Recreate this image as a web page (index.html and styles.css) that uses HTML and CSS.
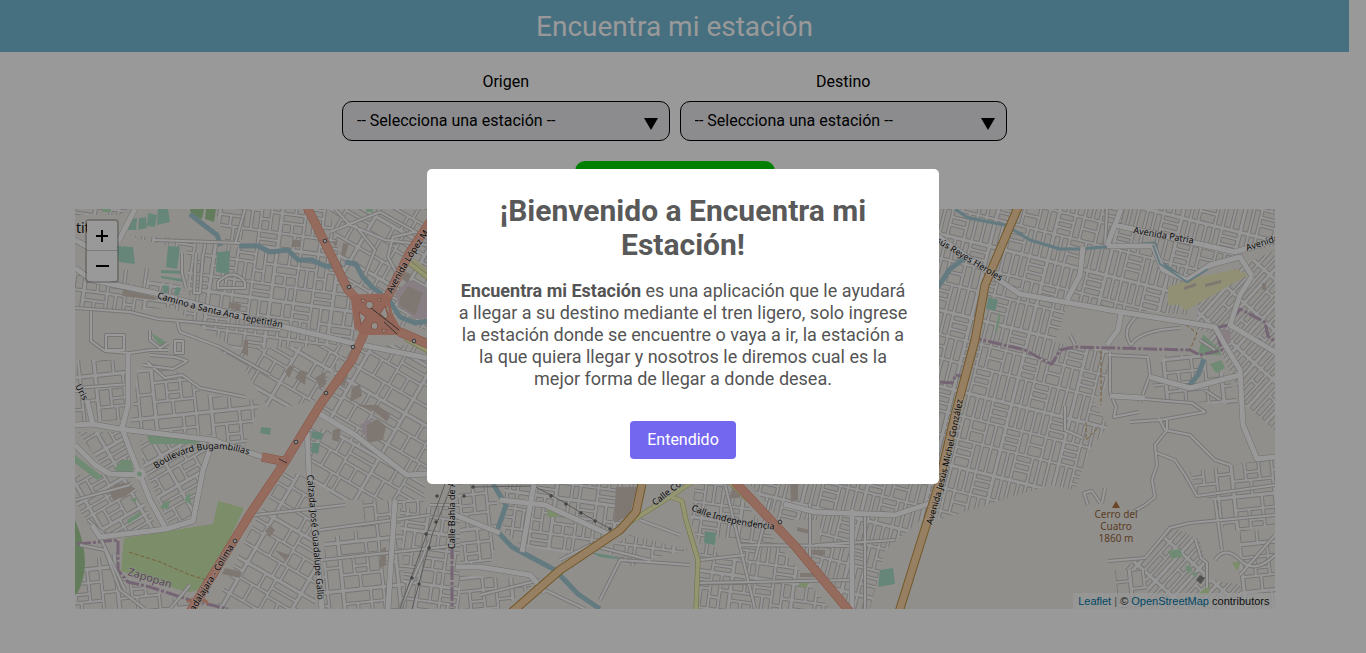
FILE: index.html
```html
<!DOCTYPE html>
<html lang="es">
<head>
<meta charset="utf-8">
<meta name="viewport" content="width=device-width, initial-scale=1">
<title>Encuentra mi estación</title>
<link rel="stylesheet" href="styles.css">
</head>
<body>
<div class="page">
  <header class="header"><h1 class="header-title">Encuentra mi estación</h1></header>
  <main class="main">
    <form class="search">
      <div class="fields">
        <div class="field">
          <label for="origen">Origen</label>
          <div class="select-box">
            <select id="origen"><option>-- Selecciona una estación --</option></select>
            <svg class="arrow" viewBox="0 0 14 12" aria-hidden="true"><path d="M0 0h14L7 12z"/></svg>
          </div>
        </div>
        <div class="field">
          <label for="destino">Destino</label>
          <div class="select-box">
            <select id="destino"><option>-- Selecciona una estación --</option></select>
            <svg class="arrow" viewBox="0 0 14 12" aria-hidden="true"><path d="M0 0h14L7 12z"/></svg>
          </div>
        </div>
      </div>
      <button class="search-button" type="button" aria-label="Buscar"></button>
    </form>

    <section class="map" aria-label="Mapa">
      <svg class="map-canvas" viewBox="75 209 1200 400" preserveAspectRatio="xMidYMid slice">
        <defs>
          <pattern id="g-a" width="62" height="52" patternUnits="userSpaceOnUse" patternTransform="rotate(8)">
            <rect class="st" width="62" height="52"/>
            <path class="bl" d="M1.500 1.500h10v13h-10zM14.500 1.500h7v13h-7zM24.500 1.500h15v5h-15zM24.500 9.500h15v5h-15zM42.500 1.500h7v21h-7zM52.500 1.500h7v13h-7zM1.500 17.500h20v6h-20zM24.500 17.500h6v17h-6zM33.500 17.500h6v17h-6zM52.500 17.500h7v17h-7zM1.500 26.500h8v8h-8zM12.500 26.500h9v8h-9zM42.500 25.500h7v9h-7zM1.500 37.500h12v12h-12zM16.500 37.500h5v12h-5zM24.500 37.500h15v12h-15zM42.500 37.500h17v5h-17zM42.500 45.500h17v4h-17z"/>
          </pattern>
          <pattern id="g-b" width="60" height="74" patternUnits="userSpaceOnUse" patternTransform="rotate(14)">
            <rect class="st" width="60" height="74"/>
            <path class="bl" d="M1.500 1.500h5v20h-5zM9.500 1.500h5v20h-5zM17.500 1.500h6v20h-6zM26.500 1.500h5v20h-5zM34.500 1.500h5v20h-5zM42.500 1.500h15v4h-15zM42.500 8.500h15v5h-15zM42.500 16.500h15v5h-15zM1.500 24.500h13v5h-13zM1.500 32.500h13v4h-13zM1.500 39.500h13v5h-13zM17.500 24.500h6v20h-6zM26.500 24.500h13v8h-13zM26.500 35.500h13v9h-13zM42.500 24.500h6v20h-6zM51.500 24.500h6v20h-6zM1.500 47.500h5v24h-5zM9.500 47.500h5v24h-5zM17.500 47.500h14v5h-14zM17.500 55.500h14v5h-14zM17.500 63.500h14v8h-14zM34.500 47.500h5v24h-5zM42.500 47.500h6v24h-6zM51.500 47.500h6v24h-6z"/>
          </pattern>
          <pattern id="g-c" width="62" height="52" patternUnits="userSpaceOnUse" patternTransform="rotate(30)">
            <rect class="st" width="62" height="52"/>
            <path class="bl" d="M1.500 1.500h18v13h-18zM22.500 1.500h9v13h-9zM34.500 1.500h25v6h-25zM34.500 10.500h25v7h-25zM1.500 17.500h12v16h-12zM16.500 17.500h15v16h-15zM34.500 20.500h11v13h-11zM48.500 20.500h11v13h-11zM1.500 36.500h25v13h-25zM29.500 36.500h6v13h-6zM38.500 36.500h21v13h-21z"/>
          </pattern>
          <pattern id="g-d" width="56" height="48" patternUnits="userSpaceOnUse" patternTransform="rotate(-6)">
            <rect class="st" width="56" height="48"/>
            <path class="bl" d="M1.500 1.500h24v10h-24zM28.500 1.500h10v10h-10zM41.500 1.500h12v21h-12zM1.500 14.500h10v16h-10zM14.500 14.500h11v8h-11zM28.500 14.500h10v16h-10zM14.500 25.500h11v5h-11zM41.500 25.500h12v20h-12zM1.500 33.500h15v12h-15zM19.500 33.500h19v12h-19z"/>
          </pattern>
          <pattern id="g-e" width="44" height="34" patternUnits="userSpaceOnUse" patternTransform="rotate(-30)">
            <rect class="st" width="44" height="34"/>
            <path class="bl" d="M1.500 1.500h17v5h-17zM1.500 9.500h17v5h-17zM21.500 1.500h20v5h-20zM21.500 9.500h20v5h-20zM1.500 17.500h8v14h-8zM12.500 17.500h14v6h-14zM12.500 26.500h14v5h-14zM29.500 17.500h12v14h-12z"/>
          </pattern>
          <pattern id="g-f" width="38" height="24" patternUnits="userSpaceOnUse" patternTransform="rotate(-48)">
            <rect class="st" width="38" height="24"/>
            <path class="bl" d="M1.500 1.500h34v5h-34zM1.500 9.500h20v5h-20zM24.500 9.500h11v5h-11zM1.500 17.500h34v4h-34z"/>
          </pattern>
          <path id="p-camino" d="M157 298Q205 314 284 328"/>
          <path id="p-bugam" d="M156 469Q200 438 249 455"/>
          <path id="p-calzada" d="M307 475Q313 540 318 604"/>
          <path id="p-indep" d="M691 510Q722 525 779 530"/>
          <path id="p-heroles" d="M929 238L1013 289"/>
          <path id="p-lopez" d="M392 294Q408 260 440 218"/>
          <path id="p-michel" d="M932 525Q950 470 966 382"/>
          <path id="p-colima" d="M188 622L243 532"/>
        </defs>

        <rect class="land" x="75" y="209" width="1200" height="400"/>

        <!-- Street grids by neighbourhood -->
        <path fill="url(#g-a)" d="M255 209H330L348 288 360 350 280 327 190 306 186 245 215 248 255 250zM215 209H300V240H225zM125 235L180 238 255 250V262L160 244zM75 270L135 285 180 307 128 311 75 306z"/>
        <path fill="url(#g-a)" d="M75 215H120L130 209H75zM145 280L180 285V309L150 305zM173 308L300 330 345 345 335 372 255 362z"/>
        <path fill="url(#g-c)" d="M330 209H430V330L395 325 345 280zM220 350L345 345 318 400 270 410 245 370zM345 345H430V475L400 470 320 412zM285 470L315 480V609H215L250 530z"/>
        <path fill="url(#g-d)" d="M78 360H125V420L75 422V390zM138 370L175 370 205 395 260 400 245 448 210 435 130 428zM340 497H425L408 609H322L325 540 358 530zM458 484H495L500 535 490 565H456zM456 575L540 580 500 609H456zM75 565L118 552V570L135 585 190 604V609H75z"/>
        <path fill="url(#g-c)" d="M309 425L360 440 425 485 424 500 340 500 312 480z"/>
        <path fill="url(#g-e)" d="M75 475L110 475 130 480 158 528 100 535 82 515 75 500zM140 440L208 442 198 515 170 527 143 465zM78 432L122 432 135 475 105 470z"/>
        <path fill="url(#g-a)" d="M505 484H638L620 525 575 555 520 545 503 530zM400 508H460V609H405zM695 484H730L830 609H700V545L690 520zM630 535L690 550 685 565 645 575 605 550z"/>
        <path fill="url(#g-b)" d="M750 484H938L933 510 885 550 870 609H845L800 545z"/>
        <path fill="url(#g-b)" d="M938 209H1275V245L1220 260 1180 285 1190 315 1082 306 1054 340 1070 347 1110 350 1105 390 1092 400 1108 425 1090 450 1075 490 1050 485 938 520z"/>
        <path fill="url(#g-f)" d="M1200 285L1275 250V430L1245 405 1220 350 1195 340zM1170 525L1200 540 1210 580 1245 585 1230 609H1128L1120 570 1145 555z"/>
        <path fill="url(#g-d)" d="M1190 472L1275 458V525L1225 532 1215 500 1198 495zM1165 355L1200 355 1230 380 1238 405 1160 400 1150 380zM1115 570H1145L1150 609H1118zM1240 530H1275V609H1240z"/>
        <path class="land" d="M1067 306L1115 316 1210 332 1204 347H1083L1073 345 1055 342zM1107 355L1148 356 1153 388 1112 396zM640 560L690 550V609H590zM710 536L740 540 745 558 720 560zM780 520H820V545H785zM320 502L362 500 365 525 330 532z"/>

        <!-- Land use -->
        <path class="pitch" d="M117 246L133 247 135 264 119 262zM168 246L180 247 177 269 166 267zM217 252L230 251 229 274 216 272zM161 270L184 271V274L161 273zM161 276L183 279V282L161 278zM163 285L169 286 167 295 163 293zM176 287L181 288 178 296 174 294zM128 219L137 218 136 230 127 230zM139 218L146 217 147 228 138 230zM148 213L157 215 155 227 147 226zM158 209H168L170 222 157 225zM312 431L323 433 321 440 311 438zM312 443L320 443 318 454 311 452zM261 427L271 428 270 435 260 433zM705 531L716 533 715 545 704 543zM880 570L893 568 895 584 878 587zM988 297L998 300 995 311 986 309zM590 552L612 556 625 560 600 557z"/>
        <path class="park" d="M102 209H111V212H102zM150 332L165 341 163 349 157 342zM147 436L160 434 200 441 198 444 150 444zM116 467L122 460 132 460 133 473 115 472zM75 455L103 477 97 480 75 463zM163 503L170 500 168 509 160 508zM184 500L190 492 191 505zM127 520L141 511 139 517 128 524zM129 500L137 497 136 502zM1203 334L1220 350 1221 355 1198 355zM1210 364L1221 360 1225 368 1216 373zM1168 551L1180 549 1183 556 1172 559zM1185 567L1190 565 1192 571 1188 573zM1191 573L1197 572 1196 578zM366 209H373V212H366zM999 313L1001 314 997 332 995 331z"/>
        <path class="forest" d="M190 209H204L202 219 191 215zM206 209H216L214 222 205 219zM75 520Q88 550 84 574 80 592 75 595z"/>
        <path class="grass" d="M124 538L213 524 218 501 244 508 207 588 190 592 183 591 121 571zM547 510H558V517H548zM1200 592L1210 584 1209 595H1198zM800 582L808 583 807 588 798 586zM1232 562h9l-4 9z"/>
        <path class="school" d="M1168 287L1193 278 1237 269 1248 275 1185 311 1180 305H1168zM415 258L432 275V284L408 265z"/>
        <path class="industrial" d="M395 292L410 280 430 290V318L415 319 398 305zM1214 328L1230 330 1231 343 1222 345zM360 425L372 418 367 440z"/>
        <path class="building" d="M400 298L408 286 423 293 415 315 399 305zM405 272L412 274 408 283 402 279zM123 289L156 297 154 300 122 296zM292 240H300V247H292zM343 243L349 244 345 257 341 255zM332 242L338 240 336 247zM244 340H248V356L242 353zM230 302L241 304 240 311 229 308zM285 372L290 365 294 367 289 378zM295 378L300 370 307 372 305 385zM315 378L325 372 326 384 320 389zM340 378L348 374 345 386 338 384zM352 388L360 384 362 396 350 402zM110 493L115 484 128 483 135 489 125 497 113 500zM367 425L377 419 386 426 383 440 367 443zM333 430L341 428 339 442 332 440zM357 405L377 405 390 415 387 422 374 411zM275 550L290 555 286 561zM265 531L270 525 275 530 270 537zM616 487H637L630 515 614 523zM380 550L386 547V565L380 568zM790 482H798V500L791 502zM797 527L810 530V534L797 531zM812 550L825 550V555L813 555zM800 573H815V577H800zM735 484H740V498H729zM1262 283h4v7h-4zM1184 287l12-4v3l-12 4zM1205 284l16-4v3l-16 4zM225 568L242 572 240 578 222 574z"/>
        <path class="rock" d="M1200 575l5 3-4 6-5-4z"/>

        <!-- Water -->
        <path class="river" d="M190 214L205 226 217 235 221 246M239 246H258L270 252 288 250 298 260 312 260 325 266 342 267M345 262L356 264 362 276 372 287 382 294M387 297L400 317 415 323 430 321M493 484L506 505 497 531 512 547 555 570 578 594 600 609M965 258L950 269 938 287M1204 359L1198 375 1187 388"/>
        <path class="stream" d="M955 209L968 218 1005 225 1030 240 1060 249 1080 249 1115 246 1155 243 1160 262 1187 280 1210 265 1237 258"/>

        <!-- Boundaries -->
        <path class="boundary" d="M77 544L118 540V570L128 582 150 587 190 600 228 609M452 545V609M940 382L952 383 956 375 964 377 974 338 1025 350 1045 361 1052 364 1060 350 1075 347 1190 350 1200 355 1222 350 1215 328 1228 325 1240 309 1265 322 1268 336 1275 342"/>
        <path class="track" d="M129 552L160 562 190 575 207 580M1186 325L1197 333 1190 350M1101 350V405M1086 422v18l8-8 5-5"/>

        <!-- Minor streets -->
        <g class="minor">
          <path id="minor" d="M75 308L130 312 158 319 280 330 M91 311V341L105 351 130 353 150 350 168 350M177 321L180 332 220 347 270 375M147 362L165 378 182 375 200 388 245 397M75 388L130 384M106 335h18v15h-18zM150 330v10l10 8 8-5M175 341h8v12h-8zM155 240L240 243M150 355l25 2 12 4-14 8-30-4M182 253v20l4 15M126 270l-2 18M147 268l-3 20M196 253l-2 40h6l3-40M245 209l-10 35M218 282q15-15 27 0v6h-27zM335 209L350 225 385 240 427 245M330 232L380 212 430 240M355 225l20 25-10 25M415 232l-22 5-5 20 8 15-8 25M75 500L130 485M88 520L105 535M80 545L105 550 120 590 145 609M100 537L125 590M190 585L170 609M205 590l-5 15M255 515L345 505M320 530L430 515M322 560L460 545M430 505H460M430 540L400 609M1075 345L1070 335M1107 209L1105 245M1159 418L1165 430 1190 435 1205 450 1215 460 1230 465M1167 420V430L1155 445 1157 465 1152 480 1155 497 1145 505 1133 512M1157 453L1175 460 1185 475 1197 496 1275 485M1110 352v40l6 15-2 10 25-5M1108 561L1145 558 1170 528 1190 523 1275 515M1115 396L1155 400 1192 403 1205 412 1160 420 1130 422M1108 355L1148 357M1148 358L1150 375 1140 402M1065 406v24l18 8M1088 505l-4-12 8-2 8 12M1105 488l-3 15M1195 538l6 20 6 5v25M1200 340L1215 350M1205 390L1220 400M1215 500L1222 550M1215 560Q1225 545 1240 560T1275 555M1240 575L1275 535M480 595L540 580M545 590L585 609M600 600L620 560 690 565M560 560L590 545 650 560M640 520L680 535M700 560L745 555M725 484L755 609M770 500L755 560M695 583L850 580M740 545L850 546M810 505V560M815 545L895 540M865 515V609M1138 315Q1120 330 1131 345 1140 330 1180 328"/>
          <use href="#minor" class="minor-fill"/>
        </g>

        <!-- Railway -->
        <path class="rail" d="M445 484L421 550 400 609M452 484L432 535 412 609M473 487L534 486 551 495 565 503 580 512 594 520 609 528"/>
        <path class="tower" d="M472 486h2v2h-2zM463 495h2v2h-2zM533 486h2v2h-2zM550 495h2v2h-2zM565 503h2v2h-2zM580 512h2v2h-2zM594 520h2v2h-2zM609 528h2v2h-2zM436 495h2v2h-2zM435 521h2v2h-2zM425 533h2v2h-2zM428 547h2v2h-2zM411 577h2v2h-2zM418 583h2v2h-2z"/>

        <!-- Main streets -->
        <g class="avenue">
          <path id="avenue" d="M75 240L90 248M118 242L135 209M75 268L92 280 155 293 255 320 352 343 427 358M75 425L92 424 120 429 213 440 262 457M87 400L93 425M128 354V405L122 428 130 450 150 500 166 529M75 445L95 465 110 474 145 475M213 440L203 470 193 521 166 529 100 537 92 525M307 428L309 475 322 609M318 413L355 435 407 475 427 474M395 500L388 609M456 567L480 567 530 575 545 592M455 515L500 533M500 500L545 505 610 535M534 484L522 552M784 504L815 512 895 515 940 500M852 510V609M918 222L1002 282 1020 294 1115 311 1215 327 1225 345 1240 370 1243 425 1257 459 1275 457M1083 247L1080 275 1067 300M1121 209L1107 246M1115 225L1235 252 1275 240M1107 246H1153L1163 270 1187 280 1210 265 1240 257 1252 276M1252 276L1240 295 1230 325 1275 352M1121 314L1118 330 1107 345M1110 396L1145 398M1150 377L1190 388 1240 375"/>
          <use href="#avenue" class="avenue-fill"/>
        </g>
        <path class="canal" d="M968 217L1005 225 1030 240 1060 249 1080 249M1153 245L1160 264 1187 282 1208 269"/>
        <circle class="roundabout" cx="139.500" cy="474" r="4"/>

        <!-- Highways -->
        <g class="secondary">
          <path id="secondary" d="M692 482L665 500 630 522M668 496L682 501 686 520 698 560 696 609M430 352L405 338M730 482L748 500M440 287L408 262"/>
          <use href="#secondary" class="secondary-fill"/>
        </g>
        <g class="primary">
          <path id="primary" d="M642 484L636 512 620 530 560 570 512 612M1019 205L985 285 975 340 955 415 938 487 899 612"/>
          <use href="#primary" class="primary-fill"/>
        </g>
        <g class="trunk">
          <path id="trunk" d="M306 205L327 247 348 290 368 312 400 332 430 345M430 222L410 252 386 300 368 325 352 360 320 405 285 462 250 514 190 612M735 482L795 546 850 612M262 457L287 462"/>
          <use href="#trunk" class="trunk-fill"/>
        </g>
        <path class="ramp" d="M353 296L384 295M352 296L356 328 364 332M387 295L391 314 400 330M364 332L398 332M280 462q10 6 7-8M187 602q15-8 21 2"/>
        <path class="junction" d="M354 296H388L385 306 400 330 398 335H360L354 322z"/>
        <path class="island" d="M366 304a3 3 0 1 1 7 2 3 3 0 0 1-7-2zM371 326a3 3 0 1 1 7 0 3 3 0 0 1-7 0zM380 314l5-8 3 10-2 3zM359 312l7 5-5 8zM361 299l5 1-4 3zM377 299l4-1-1 4zM382 329l5 1-4 3z"/>
        <path class="bridge" d="M371 308L399 330M384 322L397 334M279 459L287 463"/>
        <path class="shield" d="M323 240l3-1 1 3-3 1zM347 286l3-1 1 3-3 1zM351 346l3-1 1 3-3 1zM324 392l3-1 1 3-3 1zM412 340l3-1 1 3-3 1zM294 441l3-1 1 3-3 1zM233 540l3-1 1 3-3 1zM778 521l3-1 1 3-3 1z"/>

        <!-- Labels -->
        <g class="labels">
          <text x="76" y="233" class="label-big">tit</text>
          <text><textPath href="#p-camino">Camino a Santa Ana Tepetitlán</textPath></text>
          <text><textPath href="#p-bugam">Boulevard Bugambilias</textPath></text>
          <text><textPath href="#p-calzada">Calzada José Guadalupe Gallo</textPath></text>
          <text><textPath href="#p-indep">Calle Independencia</textPath></text>
          <text><textPath href="#p-heroles">Jesús Reyes Heroles</textPath></text>
          <text><textPath href="#p-lopez">Avenida López M</textPath></text>
          <text><textPath href="#p-michel">Avenida Jesús Michel González</textPath></text>
          <text><textPath href="#p-colima">Guadalajara - Colima</textPath></text>
          <text transform="translate(455 549) rotate(-90)">Calle Bahía de A</text>
          <text transform="translate(655 506) rotate(-38)">Calle Colón</text>
          <text transform="translate(1133 233) rotate(10)">Avenida Patria</text>
          <text transform="translate(1247 251) rotate(-18)">Avenida</text>
          <text transform="translate(75 386) rotate(62)">Uris</text>
          <text class="label-town" transform="translate(127 575) rotate(17)">Zapopan</text>
        </g>
        <g class="peak">
          <path d="M1112 508l4-7 4 7z"/>
          <text x="1116" y="518">Cerro del</text>
          <text x="1116" y="530">Cuatro</text>
          <text x="1116" y="542">1860 m</text>
        </g>
      </svg>
      <div class="zoom">
        <button type="button" aria-label="Acercar"><svg viewBox="0 0 14 14"><path d="M1 7h12M7 1v12"/></svg></button>
        <button type="button" aria-label="Alejar"><svg viewBox="0 0 14 14"><path d="M1 7h13"/></svg></button>
      </div>
      <div class="attribution"><a href="#leaflet">Leaflet</a> <span class="divider">|</span> © <a href="#osm">OpenStreetMap</a> contributors</div>
    </section>
  </main>
</div>

<div class="overlay">
  <div class="modal" role="dialog" aria-modal="true" aria-labelledby="modal-title">
    <h2 class="modal-title" id="modal-title">¡Bienvenido a Encuentra mi Estación!</h2>
    <p class="modal-text"><b>Encuentra mi Estación</b> es una aplicación que le ayudará a llegar a su destino mediante el tren ligero, solo ingrese la estación donde se encuentre o vaya a ir, la estación a la que quiera llegar y nosotros le diremos cual es la mejor forma de llegar a donde desea.</p>
    <button class="modal-button" type="button">Entendido</button>
  </div>
</div>
</body>
</html>
```
FILE: styles.css
```css
* { box-sizing: border-box; }
body { margin: 0; background: #fff; color: #000; font: 16px/20px Roboto, sans-serif; }
.page { padding-right: 17px; }

.header { padding: 10px 0 8px; background: #75b9d5; text-align: center; }
.header-title { margin: 0; color: #fff; font-size: 28px; font-weight: 400; line-height: 34px; }

.search { display: flex; flex-direction: column; align-items: center; gap: 20px; padding-top: 20px; }
.fields { display: flex; gap: 10px; width: 665px; max-width: 100%; }
.field { display: flex; flex: 1; flex-direction: column; gap: 9px; text-align: center; }
.select-box { display: grid; align-items: center; }
.select-box > * { grid-area: 1 / 1; }
.select-box select {
  width: 100%; height: 40px; padding: 0 14px; appearance: none;
  border: 1px solid #000; border-radius: 10px; background: #e9e9ed;
  color: #000; font: 16px/20px Roboto, sans-serif;
}
.arrow { z-index: 1; justify-self: end; width: 14px; height: 12px; margin: 5px 12px 0 0; pointer-events: none; }
.search-button { width: 200px; height: 38px; border: 0; border-radius: 10px; background: #00d500; }

.map { position: relative; width: 90%; max-width: 1200px; height: 400px; margin: 10px auto 44px; overflow: hidden; }
.map-canvas { display: block; width: 100%; height: 100%; }

.zoom {
  position: absolute; top: 10px; left: 10px; display: flex; flex-direction: column;
  border: 2px solid rgba(0, 0, 0, .2); border-radius: 4px; background-clip: padding-box;
}
.zoom button { display: grid; place-items: center; width: 30px; height: 30px; padding: 0; border: 0; background: #fff; }
.zoom button:first-child { border-bottom: 1px solid #ccc; border-radius: 2px 2px 0 0; }
.zoom button:last-child { border-radius: 0 0 2px 2px; }
.zoom svg { width: 14px; height: 14px; stroke: #000; stroke-width: 2; fill: none; }
.attribution {
  position: absolute; right: 0; bottom: 0; padding: 0 5px; background: rgba(255, 255, 255, .7);
  color: #222; font: 11px/16px "Liberation Sans", Arial, sans-serif;
}
.attribution a { color: #0078a8; text-decoration: none; }
.divider { color: #777; }

.land { fill: #f2efe9; }
.st { fill: #fbfbfa; }
.bl { fill: #f2efe9; stroke: #c6c4c2; stroke-width: 1; }
.pitch { fill: #aae0cb; }
.park { fill: #b9e8c0; }
.forest { fill: #a5d09a; }
.grass { fill: #cdebb0; }
.school { fill: #f2f0c4; }
.industrial { fill: #e3d4dd; }
.building { fill: #d4c7be; }
.rock { fill: #888; }
.river, .stream, .canal, .boundary, .track, .rail, .ramp, .bridge,
.minor, .avenue, .secondary, .primary, .trunk { fill: none; stroke-linejoin: round; }
.river { stroke: #a6ccd6; stroke-width: 5; }
.stream { stroke: #a6ccd6; stroke-width: 3; }
.canal { stroke: #a6ccd6; stroke-width: 2; }
.boundary { stroke: #c4a9c2; stroke-width: 3; stroke-dasharray: 14 2 3 2; }
.track { stroke: #c8a060; stroke-width: 1; stroke-dasharray: 4 2; }
.rail { stroke: #999; stroke-width: 1; }
.tower { fill: #ddd; stroke: #555; stroke-width: 1; }
.minor { stroke: #c8c6c4; stroke-width: 4; }
.minor-fill { stroke: #fff; stroke-width: 2; }
.avenue { stroke: #bdbbb9; stroke-width: 6; }
.avenue-fill { stroke: #fff; stroke-width: 5; }
.roundabout { fill: #b9e8c0; stroke: #fff; stroke-width: 3; }
.secondary { stroke: #b5b868; stroke-width: 5; }
.secondary-fill { stroke: #f7fabf; stroke-width: 4; }
.primary { stroke: #bd9145; stroke-width: 9; }
.primary-fill { stroke: #fcd6a4; stroke-width: 7; }
.trunk { stroke: #e08a70; stroke-width: 9; }
.trunk-fill { stroke: #f9b29c; stroke-width: 8; }
.ramp { stroke: #f5aa94; stroke-width: 3; }
.junction { fill: #f5aa94; }
.island { fill: #f2efe9; stroke: #e08a70; stroke-width: 1; }
.bridge { stroke: #555; stroke-width: 1; }
.shield { fill: #eee; stroke: #666; stroke-width: 1; }
.labels { fill: #111; stroke: #fff; stroke-width: 2; stroke-opacity: .4; paint-order: stroke; font: 9px "Noto Sans", sans-serif; }
.label-big { font-size: 14px; }
.label-town { fill: #9a7599; font-size: 11px; }
.peak { fill: #b47440; font: 10px "Noto Sans", sans-serif; text-anchor: middle; }
.peak text { fill: #96673c; }

.overlay { position: fixed; z-index: 10; inset: 0; display: grid; place-items: center; background: rgba(0, 0, 0, .4); }
.modal {
  display: flex; flex-direction: column; align-items: center; width: 512px; max-width: 100%;
  padding: 25px 30px; border-radius: 5px; background: #fff; text-align: center;
}
.modal-title { margin: 0; color: #595959; font-size: 30px; font-weight: 700; line-height: 34px; }
.modal-text { margin: 18px 0 31px; color: #545454; font-size: 18px; line-height: 22px; }
.modal-button { height: 38px; padding: 0 17px; border: 0; border-radius: 4px; background: #7367f0; color: #fff; font: 16px/20px Roboto, sans-serif; }
```
